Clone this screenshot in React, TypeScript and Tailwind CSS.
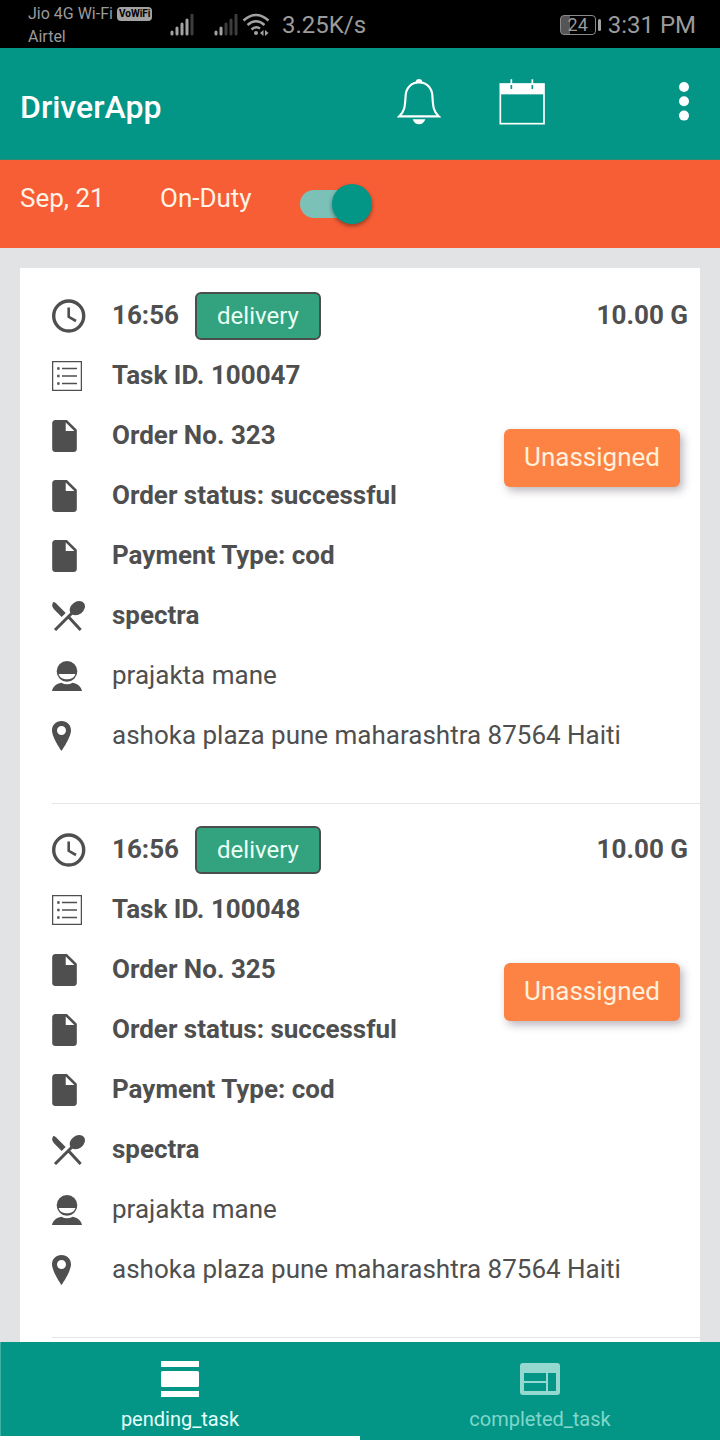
import { useState } from "react";

type Task = { time: string; id: string; order: string; amount: string };

const tasks: Task[] = [
  { time: "16:56", id: "100047", order: "323", amount: "10.00 G" },
  { time: "16:56", id: "100048", order: "325", amount: "10.00 G" },
];

function ClockIcon() {
  return (
    <svg width="34" height="34" viewBox="0 0 34 34" fill="none" stroke="currentColor" aria-hidden="true">
      <circle cx="16.7" cy="17" r="15" strokeWidth="3.4" />
      <path d="M16.7 8.6V17.8L24 22" strokeWidth="2.6" />
    </svg>
  );
}

function ListIcon() {
  return (
    <svg width="30" height="30" viewBox="0 0 30 30" fill="none" stroke="currentColor" aria-hidden="true">
      <rect x="0.6" y="0.6" width="28.8" height="28.8" strokeWidth="1.3" />
      <path d="M10 7.5H25M10 15H25M10 22.5H25" strokeWidth="1.3" />
      <path d="M5.2 7.5H7.6M5.2 15H7.6M5.2 22.5H7.6" strokeWidth="2.4" />
    </svg>
  );
}

function FileIcon() {
  return (
    <svg width="25" height="32" viewBox="96 48 320 416" fill="currentColor" aria-hidden="true">
      <path d="M288 48H136c-22 0-40 18-40 40v336c0 22 18 40 40 40h240c22 0 40-18 40-40V176L288 48zm-16 144V80l112 112H272z" />
    </svg>
  );
}

function RestaurantIcon() {
  return (
    <svg width="33" height="30" viewBox="0 0 99 90" fill="currentColor" aria-hidden="true">
      <path d="M4 3Q8 3 12 7L41 36L29 48L6 25Q-4 14 4 3Z" />
      <ellipse cx="76" cy="21.5" rx="25" ry="19" transform="rotate(-38 76 21.5)" />
      <path d="M66 30L9 87M52 50L86 87" fill="none" stroke="currentColor" strokeWidth="9" />
    </svg>
  );
}

function PersonIcon() {
  return (
    <svg width="30" height="30" viewBox="0 0 90 90" fill="currentColor" aria-hidden="true">
      <path
        fillRule="evenodd"
        d="M45 0A31 31 0 0 1 45 62A31 31 0 0 1 45 0ZM20 39C22 49 33 55 45 55S68 49 70 39Z"
      />
      <path d="M0 90C2 76 14 68 28 65Q45 74 62 65C76 68 88 76 90 90Z" />
    </svg>
  );
}

function PinIcon() {
  return (
    <svg width="19" height="30" viewBox="0 0 57 90" fill="currentColor" aria-hidden="true">
      <path
        fillRule="evenodd"
        d="M28.5 0C12 0 0 12 0 28C0 50 28.5 90 28.5 90S57 50 57 28C57 12 45 0 28.5 0ZM28.5 15A13.5 13.5 0 1 1 28.5 42A13.5 13.5 0 1 1 28.5 15Z"
      />
    </svg>
  );
}

function BellIcon() {
  return (
    <svg width="44" height="46" viewBox="0 0 132 138" aria-hidden="true">
      <path d="M56 10Q57 0 66 0T76 10Z" fill="white" />
      <path
        d="M66 10C43 10 28 26 26 48C24 80 24 96 7 112H125C108 96 108 80 106 48C104 26 89 10 66 10Z"
        fill="none"
        stroke="white"
        strokeWidth="6.5"
      />
      <path d="M47 121H85Q80 136 66 136T47 121Z" fill="white" />
    </svg>
  );
}

function CalendarIcon() {
  return (
    <svg width="46" height="46" viewBox="0 0 138 138" aria-hidden="true">
      <rect x="4" y="15" width="131" height="119" fill="none" stroke="white" strokeWidth="5" />
      <rect x="4" y="15" width="131" height="31" fill="white" />
      <path d="M37 1V18M100 1V18" stroke="white" strokeWidth="5" />
      <path d="M37 18V30M100 18V30" stroke="#039687" strokeWidth="5" />
    </svg>
  );
}

function Signal({ bars }: { bars: number }) {
  return (
    <svg width="24" height="22" viewBox="0 0 24 22" strokeLinecap="round" aria-hidden="true">
      {[3, 7, 11, 15, 20].map((h, i) => (
        <path key={h} d={`M${2 + i * 5} 20V${21 - h}`} stroke={i < bars ? "#a3a3a3" : "#3d3d3d"} strokeWidth="3" />
      ))}
    </svg>
  );
}

function StatusBar() {
  return (
    <div className="flex h-12 shrink-0 items-center bg-black pt-0.5 pr-6 pl-7 text-[#9b9b9b]">
      <div className="w-[142px] text-base leading-[23px]">
        <div className="flex items-center gap-1 whitespace-nowrap">
          Jio 4G Wi-Fi
          <span className="rounded-sm bg-[#a3a3a3] px-0.5 text-[10px] leading-[14px] font-bold text-black">VoWiFi</span>
        </div>
        <div>Airtel</div>
      </div>
      <Signal bars={4} />
      <div className="ml-5 flex items-center gap-1">
        <Signal bars={2} />
        <svg width="28" height="24" viewBox="0 0 28 24" fill="none" stroke="#a3a3a3" strokeWidth="2.5" aria-hidden="true">
          <path d="M1.5 7.5Q14 -3.5 26.5 7.5M5.5 12Q14 4.5 22.5 12M9.5 16.5Q14 12.5 18 15.5" />
          <circle cx="14" cy="20" r="2" fill="#a3a3a3" stroke="none" />
          <path d="M18 20L21.5 17V23ZM26.500 20L23 17V23Z" fill="#a3a3a3" stroke="none" />
        </svg>
      </div>
      <span className="ml-3 text-2xl">3.25K/s</span>
      <div className="ml-auto flex items-center">
        <div className="flex h-5 w-9 items-center justify-center rounded-sm border border-[#8a8a8a] bg-linear-to-r from-[#555] from-25% to-transparent to-25% text-lg leading-5">
          24
        </div>
        <div className="ml-0.5 h-3 w-[3px] rounded-sm bg-[#a3a3a3]" />
        <span className="ml-[7px] text-2xl">3:31 PM</span>
      </div>
    </div>
  );
}

function Row({ icon, children }: { icon: React.ReactNode; children: React.ReactNode }) {
  return (
    <div className="flex h-15 items-center">
      <span className="w-15 shrink-0">{icon}</span>
      {children}
    </div>
  );
}

function TaskItem({ task }: { task: Task }) {
  return (
    <li className="ml-8 border-b border-[#e6e6e6] pt-4 pb-[37px] font-bold">
      <div className="flex items-center justify-between pr-3">
        <Row icon={<ClockIcon />}>
          <span className="pb-0.5">{task.time}</span>
          <span className="ml-4 flex h-12 w-[126px] items-center justify-center rounded-md border-2 border-[#4a4f4d] bg-[#33a27e] text-2xl font-normal text-[#eafff6]">
            delivery
          </span>
        </Row>
        <span className="pb-0.5">{task.amount}</span>
      </div>
      <Row icon={<ListIcon />}>
        <span className="pb-0.5">Task ID. {task.id}</span>
      </Row>
      <div className="flex items-start justify-between pr-5">
        <div>
          <Row icon={<FileIcon />}>
            <span className="pb-0.5">Order No. {task.order}</span>
          </Row>
          <Row icon={<FileIcon />}>
            <span className="pb-0.5">Order status: successful</span>
          </Row>
        </div>
        <button
          type="button"
          className="mt-[23px] h-[58px] w-44 rounded-md bg-[#fd8344] pb-0.5 font-normal text-[#fff1dc] shadow-[3px_4px_8px_rgba(60,50,70,0.35)]"
        >
          Unassigned
        </button>
      </div>
      <Row icon={<FileIcon />}>
        <span className="pb-0.5">Payment Type: cod</span>
      </Row>
      <Row icon={<RestaurantIcon />}>
        <span className="pb-0.5">spectra</span>
      </Row>
      <Row icon={<PersonIcon />}>
        <span className="pb-0.5 font-normal">prajakta mane</span>
      </Row>
      <Row icon={<PinIcon />}>
        <span className="pb-0.5 font-normal">ashoka plaza pune maharashtra 87564 Haiti</span>
      </Row>
    </li>
  );
}

export default function App() {
  const [onDuty, setOnDuty] = useState(true);
  const [tab, setTab] = useState("pending");
  const tabClass = "flex flex-1 flex-col items-center border-b-4 pt-[18px] text-xl leading-6";

  return (
    <div className="flex h-screen flex-col overflow-hidden bg-[#e2e3e5] font-['Roboto',sans-serif] text-[26px] leading-8 text-[#4f4f4f]">
      <StatusBar />
      <header className="flex h-28 shrink-0 items-center border-b border-[#2b8a78] bg-[#039687] pr-[30px] pl-5 text-white">
        <h1 className="mt-1.5 text-[32px] font-medium">DriverApp</h1>
        <div className="mb-1 ml-auto flex items-center">
          <button type="button" aria-label="Notifications" className="mr-[58px]">
            <BellIcon />
          </button>
          <button type="button" aria-label="Calendar" className="mr-[133px]">
            <CalendarIcon />
          </button>
          <button type="button" aria-label="More options">
            <svg width="12" height="40" viewBox="0 0 12 40" fill="white" aria-hidden="true">
              <circle cx="6" cy="5" r="5" />
              <circle cx="6" cy="19.3" r="5" />
              <circle cx="6" cy="33.6" r="5" />
            </svg>
          </button>
        </div>
      </header>
      <section className="flex h-22 shrink-0 items-center bg-[#f75e36] px-5 text-[#fff3e6]">
        <span className="w-35 pb-3">Sep, 21</span>
        <label htmlFor="duty" className="w-35 pb-3">
          On-Duty
        </label>
        <span className="relative flex h-10 w-18 items-center">
          <input
            id="duty"
            type="checkbox"
            role="switch"
            checked={onDuty}
            onChange={(e) => setOnDuty(e.target.checked)}
            className="peer h-7 w-17 cursor-pointer appearance-none rounded-full bg-[#c9c9c9] checked:bg-[#7cc1b8]"
          />
          <span className="pointer-events-none absolute top-0 left-0 size-10 rounded-full bg-white shadow-[0_2px_4px_rgba(0,0,0,0.4)] peer-checked:left-8 peer-checked:bg-[#039687]" />
        </span>
      </section>
      <main className="min-h-0 flex-1 overflow-hidden px-5 pt-5">
        <ul className="min-h-full bg-white pt-0.5 pb-5">
          {tasks.map((t) => (
            <TaskItem key={t.id} task={t} />
          ))}
        </ul>
      </main>
      <nav className="flex h-[98px] shrink-0 bg-[#039687] shadow-[inset_1px_0_0_#3fb0a4]">
        <button
          type="button"
          onClick={() => setTab("pending")}
          className={`${tabClass} ${tab === "pending" ? "border-white text-[#e6fffb]" : "border-transparent text-[#7fd6cb]"}`}
        >
          <svg width="38" height="38" viewBox="0 0 38 38" fill="white" aria-hidden="true">
            <path d="M0 1H38V7H0ZM0 31H38V37H0Z" />
            <rect y="11" width="38" height="16" rx="1.5" />
          </svg>
          <span className="mt-[9px]">pending_task</span>
        </button>
        <button
          type="button"
          onClick={() => setTab("completed")}
          className={`${tabClass} ${tab === "completed" ? "border-white text-[#e6fffb]" : "border-transparent text-[#7fd6cb]"}`}
        >
          <svg width="40" height="38" viewBox="0 0 40 38" aria-hidden="true">
            <path
              fillRule="evenodd"
              fill="#95d8cf"
              d="M3 3H37Q40 3 40 6V32Q40 35 37 35H3Q0 35 0 32V6Q0 3 3 3ZM4 13V21H26V13ZM4 23V31H26V23ZM28 13V31H36V13Z"
            />
          </svg>
          <span className="mt-[9px]">completed_task</span>
        </button>
      </nav>
    </div>
  );
}
